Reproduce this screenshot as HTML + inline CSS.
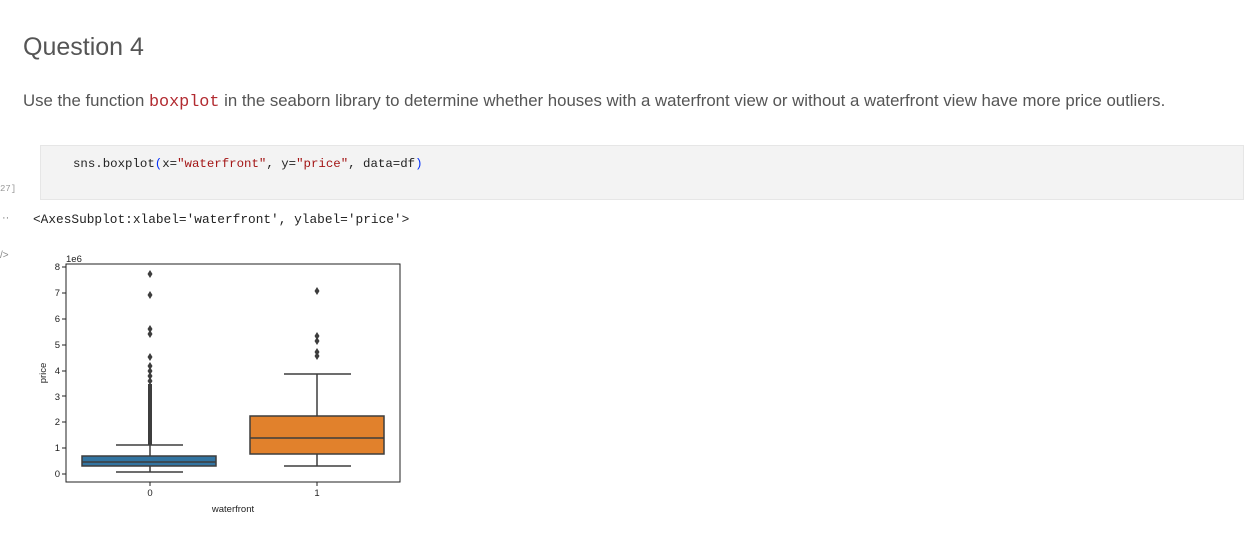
<!DOCTYPE html>
<html><head><style>
body{margin:0;width:1244px;height:559px;background:#fff;position:relative;overflow:hidden;font-family:"Liberation Sans",sans-serif;color:#333}
.a{position:absolute;white-space:nowrap}
.mono{font-family:"Liberation Mono",monospace}
</style></head><body>
<div class="a" style="left:23px;top:33px;font-size:25px;color:#555">Question 4</div>
<div class="a" style="left:23px;top:91px;font-size:16.8px;color:#555">Use the function <span class="mono" style="color:#b22b31">boxplot</span> in the seaborn library to determine whether houses with a waterfront view or without a waterfront view have more price outliers.</div>
<div class="a" style="left:40px;top:145px;width:1204px;height:55px;background:#f3f3f3;border:1px solid #e6e6e6;box-sizing:border-box"></div>
<div class="a mono" style="left:73px;top:157px;font-size:12.4px;color:#222">sns.boxplot<span style="color:#0431fa">(</span>x=<span style="color:#a31515">"waterfront"</span>, y=<span style="color:#a31515">"price"</span>, data=df<span style="color:#0431fa">)</span></div>
<div class="a mono" style="left:0;top:184px;font-size:9px;color:#999">27]</div>
<div class="a" style="left:2px;top:212px;font-size:11px;color:#777">··</div>
<div class="a" style="left:0;top:250px;font-size:10px;color:#888">/&gt;</div>
<div class="a mono" style="left:33px;top:212px;font-size:12.8px;color:#222">&lt;AxesSubplot:xlabel='waterfront', ylabel='price'&gt;</div>
<svg class="a" style="left:0;top:0" width="1244" height="559" font-family="Liberation Sans,sans-serif" font-size="9.5" fill="#222">
<rect x="66" y="264" width="334" height="218" fill="none" stroke="#222" stroke-width="1"/>
<text x="66" y="262">1e6</text>
<g text-anchor="end">
<text x="60" y="270">8</text><text x="60" y="296">7</text><text x="60" y="322">6</text><text x="60" y="348">5</text><text x="60" y="374">4</text><text x="60" y="400">3</text><text x="60" y="425">2</text><text x="60" y="451">1</text><text x="60" y="477">0</text>
</g>
<g stroke="#222"><path d="M62 267h4M62 293h4M62 319h4M62 345h4M62 371h4M62 396h4M62 422h4M62 448h4M62 474h4M150 482v4M317 482v4"/></g>
<text x="150" y="496" text-anchor="middle">0</text><text x="317" y="496" text-anchor="middle">1</text>
<text x="233" y="512" text-anchor="middle">waterfront</text>
<text transform="translate(46,373) rotate(-90)" text-anchor="middle">price</text>
<g stroke="#3d3d3d" stroke-width="1.5" fill="none">
<path d="M150 466v6M116 472h67M150 456v-11M116 445h67"/>
<rect x="82" y="456" width="134" height="10" fill="#3274a1"/>
<path d="M82 462h134"/>
<path d="M317 454v12M284 466h67M317 416v-42M284 374h67"/>
<rect x="250" y="416" width="134" height="38" fill="#e1812c"/>
<path d="M250 438h134"/>
</g>
<rect x="148" y="384" width="4" height="61" fill="#3d3d3d"/>
<g fill="#3d3d3d">
<path d="M150 270l2.5 4-2.5 4-2.5-4z M150 291l2.5 4-2.5 4-2.5-4z M150 325l2.5 4-2.5 4-2.5-4z M150 330l2.5 4-2.5 4-2.5-4z M150 353l2.5 4-2.5 4-2.5-4z M150 362l2.5 4-2.5 4-2.5-4z M150 367l2.5 4-2.5 4-2.5-4z M150 372l2.5 4-2.5 4-2.5-4z M150 377l2.5 4-2.5 4-2.5-4z"/>
<path d="M317 287l2.5 4-2.5 4-2.5-4z M317 332l2.5 4-2.5 4-2.5-4z M317 337l2.5 4-2.5 4-2.5-4z M317 348l2.5 4-2.5 4-2.5-4z M317 352l2.5 4-2.5 4-2.5-4z"/>
</g>
</svg>
</body></html>
